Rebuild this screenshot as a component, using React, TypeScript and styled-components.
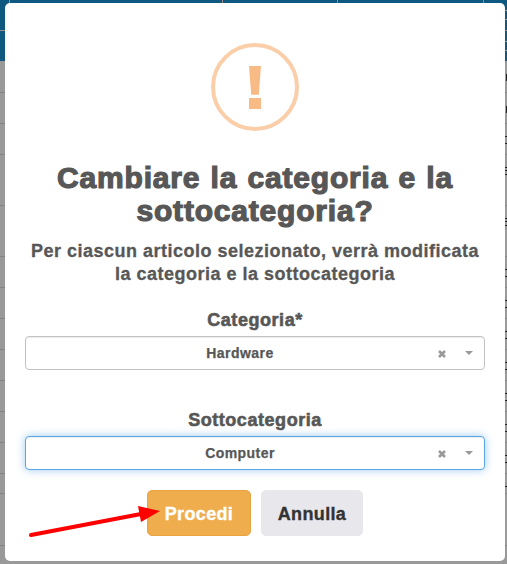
import React from "react";
import styled, { createGlobalStyle, css } from "styled-components";

const GlobalStyle = createGlobalStyle`
  * { box-sizing: border-box; }
  html, body, #root { margin: 0; height: 100%; overflow: hidden; }
  body {
    font-family: "Liberation Sans", Arial, sans-serif;
    font-weight: 700;
    color: #575757;
    background: #999;
  }
`;

const Page = styled.div`
  display: grid;
  width: 507px;
  height: 564px;
  overflow: hidden;
  > * { grid-area: 1 / 1; }
`;

const Table = styled.div`
  display: flex;
  flex-direction: column;
`;

const TableHead = styled.div`
  display: grid;
  grid-template-columns: 10px 213px 115px 146px 1fr;
  height: 31px;
  flex: none;
  background: #0f5980;
  border-bottom: 1px solid #9b8787;
`;

const HeadCell = styled.div`
  border-right: 1px solid #9b8787;
  &:last-child { border: 0; }
`;

const FilterRow = styled.div`
  height: 30px;
  flex: none;
  display: flex;
  justify-content: flex-end;
  background: #0f5980;
`;

const HeadControl = styled.div<{ $top: number; $height: number }>`
  width: 2px;
  margin-left: auto;
  margin-top: ${(p) => p.$top}px;
  height: ${(p) => p.$height}px;
  border: solid #8fa4ae;
  border-width: 1px 0;
`;

const Row = styled.div<{ $height: number }>`
  display: flex;
  justify-content: flex-end;
  flex: none;
  height: ${(p) => p.$height}px;
  border-bottom: 1px solid #858585;
`;

type ControlKind = "box" | "text" | "lines" | "top";

const RowControl = styled.div<{ $kind: ControlKind }>`
  width: 2px;
  margin-top: 12px;
  height: 8px;
  border: solid #222;
  border-width: 1px 0;
  ${(p) =>
    p.$kind === "text" &&
    css`
      width: 1px;
      margin-top: 13px;
      height: 7px;
      background: #222;
    `}
  ${(p) =>
    p.$kind === "lines" &&
    css`
      background: linear-gradient(#222, #222) 0 2px / 100% 1px no-repeat;
    `}
  ${(p) =>
    p.$kind === "top" &&
    css`
      border-bottom: 0;
    `}
`;

const Modal = styled.main`
  align-self: start;
  justify-self: start;
  z-index: 1;
  display: flex;
  flex-direction: column;
  align-items: center;
  width: 500px;
  height: 558px;
  margin: 3px 0 0 5px;
  padding: 40px 20px 25px;
  border-radius: 5px;
  background: #fff;
`;

const WarningIcon = styled.svg`
  width: 88px;
  height: 88px;
  flex: none;
`;

const Title = styled.h2`
  margin: 30px 0 0;
  height: 66px;
  font-size: 30px;
  line-height: 33px;
  letter-spacing: 0.8px;
  word-spacing: 1.2px;
  text-align: center;
  white-space: pre-line;
  -webkit-text-stroke: 1.2px #575757;
`;

const Message = styled.p`
  margin: 13px 0 0;
  height: 46px;
  font-size: 18px;
  line-height: 23px;
  letter-spacing: 0.5px;
  text-align: center;
  white-space: pre;
  -webkit-text-stroke: 0.3px #575757;
`;

const Label = styled.label`
  display: block;
  height: 24px;
  font-size: 18px;
  line-height: 24px;
  letter-spacing: 0.55px;
  text-align: center;
  -webkit-text-stroke: 0.6px #575757;
`;

const Field = styled.div<{ $top: number }>`
  width: 460px;
  margin-top: ${(p) => p.$top}px;
`;

const Select = styled.div<{ $focused?: boolean }>`
  display: grid;
  grid-template-columns: 429px 1fr;
  align-items: center;
  height: 34px;
  margin-top: 4px;
  border: 1px solid ${(p) => (p.$focused ? "#5ba7e6" : "#c2c2c2")};
  border-radius: 4px;
  background: #fff;
  box-shadow: ${(p) =>
    p.$focused
      ? "inset 0 1px 1px rgba(0,0,0,.075), 0 0 8px rgba(91,167,230,.6)"
      : "inset 0 1px 1px rgba(0,0,0,.075)"};
`;

const Value = styled.span`
  display: grid;
  grid-template-columns: 1fr 18px;
  align-items: center;
  padding-left: 17px;
  text-align: center;
  font-size: 14px;
  line-height: 20px;
  letter-spacing: 0.45px;
  -webkit-text-stroke: 0.25px #575757;
`;

const Clear = styled.svg`
  width: 8px;
  height: 8px;
  margin: 2px 0 0 1px;
`;

const Caret = styled.span`
  width: 0;
  margin-left: 10px;
  border: solid transparent;
  border-width: 4px 4px 0;
  border-top-color: #999;
`;

const Actions = styled.div`
  display: flex;
  gap: 10px;
  margin-top: 20px;
`;

const Button = styled.button<{ $primary?: boolean }>`
  width: ${(p) => (p.$primary ? 104 : 102)}px;
  height: 46px;
  padding: 2px 0 0;
  border: 1px solid ${(p) => (p.$primary ? "#e9a340" : "#e8e8ec")};
  border-radius: 5px;
  background: ${(p) => (p.$primary ? "#f0ad4e" : "#e8e7ec")};
  color: ${(p) => (p.$primary ? "#fff" : "#333")};
  font: 700 18px "Liberation Sans", Arial, sans-serif;
  letter-spacing: 0.35px;
  -webkit-text-stroke: 0.35px currentColor;
`;

const Arrow = styled.svg`
  z-index: 2;
  pointer-events: none;
  align-self: end;
  width: 132px;
  height: 34px;
  margin: 0 0 25px 28px;
`;

const rows: { height: number; control?: ControlKind }[] = [
  { height: 32, control: "text" },
  { height: 31, control: "text" },
  { height: 31, control: "box" },
  { height: 51, control: "lines" },
  { height: 51, control: "lines" },
  { height: 31, control: "box" },
  { height: 31, control: "box" },
  { height: 31, control: "box" },
  { height: 31, control: "box" },
  { height: 31, control: "box" },
  { height: 31, control: "box" },
  { height: 31, control: "box" },
  { height: 20, control: "top" },
  { height: 52 },
];

function SelectField({ label, value, top, focused }: { label: string; value: string; top: number; focused?: boolean }) {
  return (
    <Field $top={top}>
      <Label>{label}</Label>
      <Select $focused={focused}>
        <Value>
          {value}
          <Clear viewBox="0 0 8 8" aria-hidden="true">
            <path d="M1 1 7 7M7 1 1 7" stroke="#999" strokeWidth="2.6" />
          </Clear>
        </Value>
        <Caret />
      </Select>
    </Field>
  );
}

export default function App() {
  return (
    <>
      <GlobalStyle />
      <Page>
        <Table aria-hidden="true">
          <TableHead>
            <HeadCell />
            <HeadCell />
            <HeadCell />
            <HeadCell />
            <HeadCell>
              <HeadControl $top={10} $height={10} />
            </HeadCell>
          </TableHead>
          <FilterRow>
            <HeadControl $top={10} $height={10} />
          </FilterRow>
          {rows.map((row, i) => (
            <Row key={i} $height={row.height}>
              {row.control && <RowControl $kind={row.control} />}
            </Row>
          ))}
        </Table>
        <Modal role="dialog">
          <WarningIcon viewBox="0 0 88 88" aria-hidden="true">
            <circle cx="44" cy="44" r="42" fill="none" stroke="#facea8" strokeWidth="4" />
            <path d="M38 23H50L47.8 51.7H40.2ZM38 55H50V66H38Z" fill="#f8bb86" />
          </WarningIcon>
          <Title>{"Cambiare la categoria e la\nsottocategoria?"}</Title>
          <Message>{"Per ciascun articolo selezionato, verrà modificata\nla categoria e la sottocategoria"}</Message>
          <SelectField label="Categoria*" value="Hardware" top={22} />
          <SelectField label="Sottocategoria" value="Computer" top={38} focused />
          <Actions>
            <Button $primary>Procedi</Button>
            <Button>Annulla</Button>
          </Actions>
        </Modal>
        <Arrow viewBox="0 0 132 34" aria-hidden="true">
          <path d="M3 30 113 9" stroke="#f00" strokeWidth="4" strokeLinecap="round" />
          <path d="M110 1 132 6 113 17Z" fill="#f00" />
        </Arrow>
      </Page>
    </>
  );
}
